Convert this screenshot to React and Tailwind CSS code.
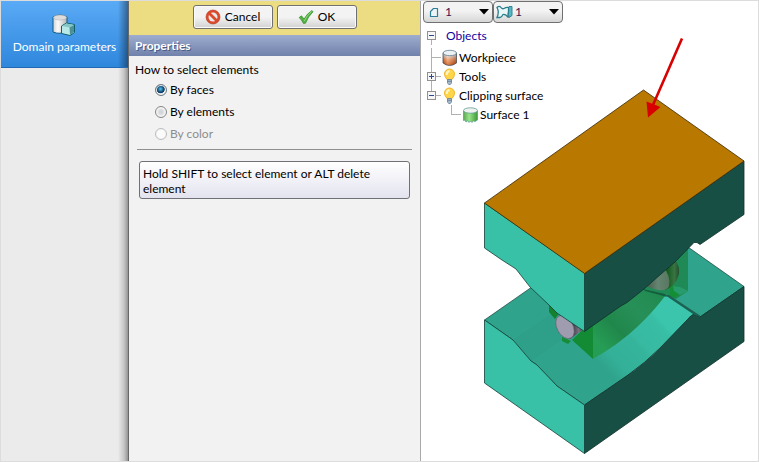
import { useState } from "react";

const FONT = "font-['Lato','Open_Sans',sans-serif]";

function DomainIcon() {
  return (
    <svg width="26" height="24" viewBox="0 0 26 24" aria-hidden="true">
      <defs>
        <linearGradient id="cyl" x1="0" x2="1">
          <stop offset="0" stopColor="#cfcfcf" />
          <stop offset=".35" stopColor="#fbfbfb" />
          <stop offset="1" stopColor="#b4b4b4" />
        </linearGradient>
      </defs>
      <path d="M1 4 Q8 0 15 4 V18 Q8 22 1 19 Z" fill="url(#cyl)" stroke="#0f5f85" />
      <ellipse cx="8" cy="4.500" rx="6.500" ry="2.500" fill="#e0dcdc" stroke="#aaa" strokeWidth=".5" />
      <path d="M9.500 13 L14.500 10 L22.500 11.500 V19.500 L18 22.500 L9.500 20.500 Z" fill="#b8e8e8" stroke="#0f6070" />
      <path d="M10 13 L14.500 10.500 L22 12 L17.500 14.500 Z" fill="#86c5c5" />
      <path d="M17.500 14.500 L22 12 V19 L18 22 Z" fill="#4b9196" />
    </svg>
  );
}

function ForbidIcon() {
  return (
    <svg width="16" height="16" viewBox="0 0 16 16" aria-hidden="true">
      <circle cx="8" cy="8" r="7" fill="#dc4a2c" stroke="#b5321c" strokeWidth=".6" />
      <circle cx="8" cy="8" r="4.500" fill="#e9e9e9" />
      <path d="M4 4 L12 12" stroke="#dc4a2c" strokeWidth="2.800" />
    </svg>
  );
}

function CheckIcon() {
  return (
    <svg width="16" height="16" viewBox="0 0 16 16" aria-hidden="true">
      <path d="M1.200 8.500 L3.500 6.800 L6 10 Q9 4.500 14 1.500 L15 2.800 Q10 7.500 7.500 14.200 L5.500 14.500 Q3.800 11 1.200 8.500 Z" fill="#56b244" stroke="#2f8a2a" strokeWidth=".7" />
      <path d="M6.300 12 Q9 6 13.500 2.500" stroke="#8fd97c" fill="none" />
    </svg>
  );
}

function VertexIcon() {
  return (
    <svg width="16" height="16" viewBox="0 0 16 16" aria-hidden="true">
      <path d="M4.500 12.500 V7.500 L7.500 4.500 H11.500 V12.500 Z" fill="#eef4f6" stroke="#2d7f99" strokeWidth="1.200" strokeLinejoin="round" />
    </svg>
  );
}

function SurfaceMeshIcon() {
  return (
    <svg width="17" height="16" viewBox="0 0 17 16" aria-hidden="true">
      <path d="M11.500 4.500 L13 2.500 H16 V11.500 L13 13.500 Z" fill="#58b8c4" stroke="#2a7c8c" strokeWidth=".9" />
      <path d="M1 3.500 Q3 1.500 4.500 3 Q6 5.500 8 4.500 Q10.500 2.800 12.500 3.500 V8 Q11.500 10 12.500 13.500 Q9 9.500 7 10.500 Q5.500 13.500 4 13.500 H1 Q3.500 8 1 3.500 Z" fill="#e9f6f6" stroke="#2a7c8c" strokeWidth="1.300" />
    </svg>
  );
}

function WorkpieceIcon() {
  return (
    <svg width="16" height="18" viewBox="0 0 16 18" aria-hidden="true">
      <defs>
        <linearGradient id="hot" x1="0" y1="0" x2="0" y2="1">
          <stop offset=".2" stopColor="#dcdcdc" />
          <stop offset=".5" stopColor="#ee9058" />
          <stop offset=".9" stopColor="#d24c04" />
        </linearGradient>
        <linearGradient id="hotShade" x1="0" x2="1">
          <stop offset="0" stopColor="#5a2000" stopOpacity=".3" />
          <stop offset=".35" stopColor="#fff" stopOpacity=".3" />
          <stop offset="1" stopColor="#5a2000" stopOpacity=".35" />
        </linearGradient>
      </defs>
      <path d="M1 4 V14 Q7.500 19 14.500 14 V4 Z" fill="url(#hot)" />
      <path d="M1 4 V14 Q7.500 19 14.500 14 V4 Z" fill="url(#hotShade)" stroke="#4a5058" strokeWidth=".8" />
      <ellipse cx="7.800" cy="4" rx="6.700" ry="2.700" fill="#eef1f3" stroke="#5c7f92" strokeWidth=".8" />
    </svg>
  );
}

function BulbIcon() {
  return (
    <svg width="16" height="18" viewBox="0 0 16 18" aria-hidden="true">
      <path d="M5 11.500 Q2.500 8.500 2.500 6 A5 5 0 0 1 12.500 6 Q12.500 8.500 10 11.500 Z" fill="#ffd64a" stroke="#f0b429" />
      <path d="M4.700 7 Q4.500 3.500 7.500 3" stroke="#fff6c8" strokeWidth="2" fill="none" />
      <path d="M5.500 11.500 H9.500 V15 L8.300 16.500 H6.700 L5.500 15 Z" fill="#a9bccb" stroke="#64809a" strokeWidth=".8" />
      <path d="M5.500 13.300 H9.500" stroke="#5b7690" strokeWidth=".8" />
    </svg>
  );
}

function GreenSurfaceIcon() {
  return (
    <svg width="17" height="18" viewBox="0 0 17 18" aria-hidden="true">
      <defs>
        <linearGradient id="grn" x1="0" x2="1">
          <stop offset="0" stopColor="#5aa850" />
          <stop offset=".4" stopColor="#9be38a" />
          <stop offset="1" stopColor="#3c9a38" />
        </linearGradient>
      </defs>
      <path d="M1.500 5 V14.500 L3 14 L4 16 L5.500 14.800 L7 16.500 L8.500 15 L10 16.500 L11.500 14.800 L13 15.500 L15.500 14 V5 Z" fill="url(#grn)" stroke="#5a9f90" strokeWidth=".8" />
      <ellipse cx="8.500" cy="4.500" rx="7" ry="2.700" fill="#f0f2ef" stroke="#5f9c94" strokeWidth=".8" />
    </svg>
  );
}

/* Connector lines plus the optional +/- box in front of a tree item. */
function Gutter({ up, down, stub, box }) {
  return (
    <svg width="20" height="19" viewBox="0 0 20 19" className="block" shapeRendering="crispEdges" aria-hidden="true">
      {up && <path d="M9.500 0 V9" stroke="#b0b0b0" />}
      {down && <path d="M9.500 9 V19" stroke="#b0b0b0" />}
      {stub && <path d="M9 9.500 H19" stroke="#b0b0b0" />}
      {box && (
        <g>
          <rect x="5.500" y="5.500" width="8" height="8" fill="#f6f6f6" stroke="#919191" />
          <path d="M7 9.500 H12" stroke="#294a93" />
          {box === "plus" && <path d="M9.500 7 V12" stroke="#294a93" />}
        </g>
      )}
    </svg>
  );
}

function TreeItem({ icon, label, box, indent, ...lines }) {
  return (
    <li className={`flex h-[19px] items-center ${indent ? "pl-5" : ""}`}>
      {box ? (
        <button type="button" aria-label={`Toggle ${label}`}>
          <Gutter box={box} {...lines} />
        </button>
      ) : (
        <Gutter {...lines} />
      )}
      {icon}
      <span className="ml-px whitespace-nowrap">{label}</span>
    </li>
  );
}

function ToolSelect({ icon, label }) {
  return (
    <label className="relative block h-[22px] w-[70px]">
      <select aria-label={label} defaultValue="1" className="h-full w-full appearance-none rounded-sm border border-[#707070] bg-linear-to-b from-[#f3f3f3] from-45% to-[#d6d6d6] pl-[21px] text-[#3b1450]">
        <option>1</option>
        <option>2</option>
      </select>
      <span className="pointer-events-none absolute top-[3px] left-[3px]">{icon}</span>
      <svg className="pointer-events-none absolute top-2 right-1" width="10" height="6" viewBox="0 0 10 6" aria-hidden="true">
        <path d="M0 0 H10 L5 5.500 Z" fill="#000" />
      </svg>
    </label>
  );
}

function ActionButton({ icon, children }) {
  return (
    <button type="button" className="flex h-6 w-20 items-center justify-center gap-1 rounded-[3px] border border-[#707070] bg-linear-to-b from-[#f3f3f3] from-50% to-[#d2d2d2] shadow-[inset_0_0_0_1px_#fafafa]">
      {icon}
      {children}
    </button>
  );
}

function RadioOption({ label, disabled, checked, onChange }) {
  return (
    <label className={`flex h-[22px] items-center gap-[3px] ${disabled ? "text-[#8d8d8d]" : ""}`}>
      <input
        type="radio"
        name="selection-mode"
        disabled={disabled}
        checked={checked}
        onChange={onChange}
        className="size-3 appearance-none rounded-full border border-[#858585] bg-[radial-gradient(circle,#d3d6da_25%,#f4f4f4_60%)] shadow-[inset_0_0_0_1px_#f4f4f4] checked:border-[#6c7880] checked:bg-[radial-gradient(circle_at_45%_40%,#58c4ee_0%,#124b78_38%,#123a5c_48%,#e4e8ea_56%)] disabled:border-[#bcbcbc] disabled:bg-[#fbfbfb] disabled:bg-none"
      />
      {label}
    </label>
  );
}

function Scene() {
  return (
    <svg className="absolute inset-0 h-full w-full" viewBox="421 1 337 460" preserveAspectRatio="xMinYMin meet" role="img" aria-label="Die model">
      <defs>
        <linearGradient id="slope" gradientUnits="userSpaceOnUse" x1="604" y1="368" x2="674" y2="304">
          <stop offset="0" stopColor="#30a38c" />
          <stop offset=".15" stopColor="#34b098" />
          <stop offset=".42" stopColor="#35b49c" />
          <stop offset=".46" stopColor="#36b9a0" />
          <stop offset=".73" stopColor="#38bea5" />
          <stop offset=".78" stopColor="#3ac5ac" />
        </linearGradient>
        <linearGradient id="strip" gradientUnits="userSpaceOnUse" x1="600" y1="345" x2="655" y2="290">
          <stop offset="0" stopColor="#269d55" />
          <stop offset=".3" stopColor="#20874b" />
          <stop offset=".65" stopColor="#279058" />
          <stop offset="1" stopColor="#208b50" />
        </linearGradient>
        <linearGradient id="rod" x1="0" x2="1">
          <stop offset="0" stopColor="#3f5445" />
          <stop offset=".55" stopColor="#668571" />
          <stop offset="1" stopColor="#58775f" />
        </linearGradient>
        <linearGradient id="rodSide" x1="0" x2="1">
          <stop offset="0" stopColor="#0b7b20" />
          <stop offset=".4" stopColor="#155c20" />
          <stop offset=".75" stopColor="#397442" />
          <stop offset="1" stopColor="#244e2e" />
        </linearGradient>
        <linearGradient id="discSide" x1="0" x2="1">
          <stop offset=".4" stopColor="#2c2931" />
          <stop offset=".75" stopColor="#77717f" />
          <stop offset="1" stopColor="#3c5546" />
        </linearGradient>
      </defs>

      {/* lower die */}
      <path d="M484.500 320 L529 289 L560 268 L688 247 L744 286.500 L700 317 L694 314 L628 375 L584.500 405 L557 386 L537 365 L531 361 L513 340 Z" fill="#30a38c" stroke="#143f36" strokeWidth=".7" />
      <path d="M513 340 L557 310 L575 331 L531 361 Z" fill="#2e9f89" />
      <path d="M593 359 Q619 344 637 327 Q653 312 665 295 L694 314 Q674 335 660 348 Q644 364 628 375 L602 393 Z" fill="url(#slope)" />
      <path d="M584.500 405 L628 375 Q645 363 660 348 L687 320 Q691 315 694 314 L700 317 L744 286.500 V341.500 L584.500 453.500 Z" fill="#184f44" stroke="#0e302a" strokeWidth=".8" />
      <path d="M484.500 320 L513 340 L531 361 L537 365 L557 386 L584.500 405 V453.500 L484.500 383 Z" fill="#38c1a7" stroke="#143f36" strokeWidth=".8" />

      {/* clipped billet */}
      <path d="M688 247 V291 L676 299 L665 295 L643 290 L640 280 Z" fill="#208a56" />
      <path d="M670 285 L679 287 L686 291 L674 298 L670 296 Z" fill="#138e35" />
      <path d="M673 286 L680 287 L688 291 L680 295 L674 291 Z" fill="#289b6c" />
      <path d="M660 260 H675 Q680 266 679 274 Q676 286 665 290 Z" fill="url(#rodSide)" />
      <path d="M644 285 L662 266 Q671 275 669 286 Q668 291 658 290 Q650 288 644 285 Z" fill="url(#rod)" />
      <path d="M593 359 V325 L643 290 L665 296 Q653 312 637 327 Q619 344 593 359 Z" fill="url(#strip)" />
      <path d="M643 289 L665 294 L667 297 L645 291 Z" fill="#135f3e" />
      <path d="M665 295 L669 295 L700 315.500 V317 L693 314 Z" fill="#1c6253" />
      <path d="M593 359 L572 340 L584.500 328 L593 325 Z" fill="#138b34" />
      <path d="M549 304 L560 312 L555 319 L549 312 Z" fill="#13812d" />
      <path d="M562 337 L571 341 L568 344 L562 341 Z" fill="#168d35" />
      <path d="M562 315 L584 329 L570 339 Z" fill="url(#discSide)" />
      <ellipse cx="565" cy="327" rx="8" ry="12.500" transform="rotate(-29 565 327)" fill="#a09cb0" stroke="#635e6c" strokeWidth=".6" />

      {/* upper die */}
      <path d="M584.500 273 L744 161 V214.500 L700 244.500 L697 242.500 L694 242.500 L675 262 L661 274 L644 289 L627 302.500 L620 306.500 L584.500 331.500 Z" fill="#184f44" stroke="#0e302a" strokeWidth=".8" />
      <path d="M484.500 203 L584.500 273 V331.500 L557 313 L549 305 L530 287 L516 269 L502 260 L484.500 248 Z" fill="#38c1a7" stroke="#143f36" strokeWidth=".8" />
      <path d="M484.500 203 L643.500 90 L744 161 L584.500 273.500 Z" fill="#b97800" stroke="#3a2a08" strokeWidth=".8" />

      {/* pointer to the picked face */}
      <path d="M682 38.500 L653 105" stroke="#d80000" strokeWidth="2.600" />
      <path d="M648 117.500 L646.500 101.500 L660.500 107 Z" fill="#d80000" />
    </svg>
  );
}

export default function App() {
  const [mode, setMode] = useState("faces");
  return (
    <div className={`grid min-h-screen grid-cols-[127px_292px_minmax(0,1fr)] border border-[#dcdcdc] bg-white text-[12px] leading-4 text-black ${FONT}`}>
      <nav className="bg-[linear-gradient(to_left,#949494_0,#c6c6c6_4px,#ebebeb_10px)]">
        <button type="button" className="flex h-[67px] w-full flex-col items-center border-b border-[#2269b5] bg-[linear-gradient(to_left,#0006_0,#0000_10px),linear-gradient(#5aaaf6,#2f87dc)] pt-3 text-white">
          <DomainIcon />
          <span className="mt-0.5 whitespace-nowrap">Domain parameters</span>
        </button>
      </nav>

      <section className="border-l border-[#686868] bg-[#f2f2f2]">
        <div className="flex h-[34px] items-start justify-center gap-1 bg-[#ecdc82] pt-1">
          <ActionButton icon={<ForbidIcon />}>Cancel</ActionButton>
          <ActionButton icon={<CheckIcon />}>OK</ActionButton>
        </div>
        <h2 className="flex h-[21px] items-center bg-linear-to-b from-[#9eadcf] to-[#7081ab] pl-1.5 font-bold text-white text-shadow-[1px_1px_0_#4c5b84]">Properties</h2>
        <div className="pt-1.5 pr-2 pl-1.5">
          <fieldset>
            <legend>How to select elements</legend>
            <div className="pl-5 pt-px">
              <RadioOption label="By faces" checked={mode === "faces"} onChange={() => setMode("faces")} />
              <RadioOption label="By elements" checked={mode === "elements"} onChange={() => setMode("elements")} />
              <RadioOption label="By color" disabled checked={false} onChange={() => setMode("color")} />
            </div>
          </fieldset>
          <hr className="mt-1 ml-0.5 border-[#909090]" />
          <p className="mt-[11px] mr-0.5 ml-1 rounded-[3px] border border-[#707078] bg-linear-to-b from-white to-[#e3e3ef] px-[3px] pt-1 pb-0.5 leading-[15px]">
            Hold SHIFT to select element or ALT delete element
          </p>
        </div>
      </section>

      <main className="relative border-l border-[#a9a9a9]">
        <Scene />
        <div className="relative">
          <div className="flex pl-0.5">
            <ToolSelect icon={<VertexIcon />} label="Vertices" />
            <ToolSelect icon={<SurfaceMeshIcon />} label="Surfaces" />
          </div>
          <ul className="pt-[3px] pl-px">
            <li className="flex h-[22px] items-start">
              <button type="button" aria-label="Toggle Objects">
                <Gutter box="minus" down />
              </button>
              <span className="ml-1 leading-5 text-[#1400a0]">Objects</span>
            </li>
            <TreeItem up down stub icon={<WorkpieceIcon />} label="Workpiece" />
            <TreeItem up down stub box="plus" icon={<BulbIcon />} label="Tools" />
            <TreeItem up stub box="minus" icon={<BulbIcon />} label="Clipping surface" />
            <TreeItem up stub indent icon={<GreenSurfaceIcon />} label="Surface 1" />
          </ul>
        </div>
      </main>
    </div>
  );
}
